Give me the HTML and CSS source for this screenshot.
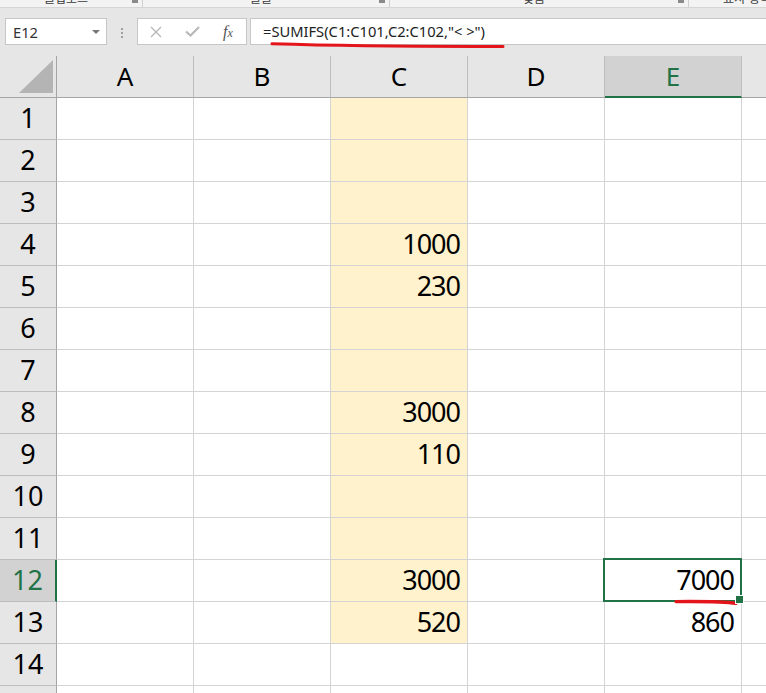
FILE: index.html
```html
<!DOCTYPE html>
<html lang="ko">

<head>
    <meta charset="UTF-8">
    <meta name="viewport" content="width=device-width, initial-scale=1.0">
    <title>SUMIFS</title>
    <link rel="stylesheet" href="styles.css">
</head>

<body>
    <!-- 리본 아래쪽 그룹 이름 (잘려서 보임) -->
    <div class="ribbon_tail">
        <div class="group g_clip"><span class="label">클립보드</span><span class="launcher"></span></div>
        <div class="group g_font"><span class="label">글꼴</span><span class="launcher"></span></div>
        <div class="group g_align"><span class="label">맞춤</span><span class="launcher"></span></div>
        <div class="group g_num"><span class="label">표시 형식</span></div>
    </div>

    <div class="formula_bar">
        <div class="name_box"><span>E12</span><span class="arrow"></span></div>
        <div class="dots"><i></i><i></i><i></i></div>
        <div class="fx_buttons">
            <span class="btn">
                <svg width="12" height="12" viewBox="0 0 12 12"><path d="M1 1L11 11M11 1L1 11" stroke="#b8b8b8" stroke-width="1.4" fill="none"/></svg>
            </span>
            <span class="btn">
                <svg width="15" height="11" viewBox="0 0 15 11"><path d="M1 5.5L5.5 9.5L14 1" stroke="#b8b8b8" stroke-width="2.2" fill="none"/></svg>
            </span>
            <span class="btn fx">f<small>x</small></span>
        </div>
        <div class="formula_input">=SUMIFS(C1:C101,C2:C102,"&lt; &gt;")</div>
    </div>

    <div class="sheet">
        <div class="corner"><svg width="34" height="33" viewBox="0 0 34 33"><polygon points="34,0 34,33 0,33" fill="#b4b4b4"/></svg></div>
        <div class="hd">A</div><div class="hd">B</div><div class="hd">C</div><div class="hd">D</div><div class="hd on">E</div><div class="hd">F</div>

        <div class="rh">1</div><div class="c"></div><div class="c"></div><div class="c y"></div><div class="c"></div><div class="c"></div><div class="c"></div>
        <div class="rh">2</div><div class="c"></div><div class="c"></div><div class="c y"></div><div class="c"></div><div class="c"></div><div class="c"></div>
        <div class="rh">3</div><div class="c"></div><div class="c"></div><div class="c y"></div><div class="c"></div><div class="c"></div><div class="c"></div>
        <div class="rh">4</div><div class="c"></div><div class="c"></div><div class="c y">1000</div><div class="c"></div><div class="c"></div><div class="c"></div>
        <div class="rh">5</div><div class="c"></div><div class="c"></div><div class="c y">230</div><div class="c"></div><div class="c"></div><div class="c"></div>
        <div class="rh">6</div><div class="c"></div><div class="c"></div><div class="c y"></div><div class="c"></div><div class="c"></div><div class="c"></div>
        <div class="rh">7</div><div class="c"></div><div class="c"></div><div class="c y"></div><div class="c"></div><div class="c"></div><div class="c"></div>
        <div class="rh">8</div><div class="c"></div><div class="c"></div><div class="c y">3000</div><div class="c"></div><div class="c"></div><div class="c"></div>
        <div class="rh">9</div><div class="c"></div><div class="c"></div><div class="c y">110</div><div class="c"></div><div class="c"></div><div class="c"></div>
        <div class="rh">10</div><div class="c"></div><div class="c"></div><div class="c y"></div><div class="c"></div><div class="c"></div><div class="c"></div>
        <div class="rh">11</div><div class="c"></div><div class="c"></div><div class="c y"></div><div class="c"></div><div class="c"></div><div class="c"></div>
        <div class="rh on">12</div><div class="c"></div><div class="c"></div><div class="c y">3000</div><div class="c"></div><div class="c sel">7000</div><div class="c"></div>
        <div class="rh">13</div><div class="c"></div><div class="c"></div><div class="c y">520</div><div class="c"></div><div class="c">860</div><div class="c"></div>
        <div class="rh">14</div><div class="c"></div><div class="c"></div><div class="c"></div><div class="c"></div><div class="c"></div><div class="c"></div>
        <div class="rh">15</div><div class="c"></div><div class="c"></div><div class="c"></div><div class="c"></div><div class="c"></div><div class="c"></div>
    </div>

    <!-- 빨간 밑줄 표시 -->
    <svg class="marks" width="766" height="693" viewBox="0 0 766 693">
        <path d="M272 43.8C330 45.6 420 46.6 503 46.4" stroke="#e3151b" stroke-width="3" stroke-linecap="round" fill="none"/>
        <path d="M676 601.6C700 601.4 724 601.4 736 603.4" stroke="#e3151b" stroke-width="3.4" stroke-linecap="round" fill="none"/>
    </svg>
</body>

</html>
```

FILE: styles.css
```css
* {
    margin: 0;
    padding: 0;
    box-sizing: border-box;
}

body {
    position: relative;
    width: 766px;
    height: 693px;
    overflow: hidden;
    background-color: #fff;
    font-family: "Noto Sans", "Noto Sans CJK KR", sans-serif;
}

/* 리본 */
.ribbon_tail {
    display: flex;
    height: 8px;
    overflow: hidden;
    background-color: #f3f3f3;
    border-bottom: 1px solid #d5d5d5;
    font-family: "Noto Sans CJK KR", sans-serif;
    font-size: 12px;
    line-height: 12px;
    color: #3c3c3c;
}

.ribbon_tail .group {
    display: flex;
    flex-shrink: 0;
    border-right: 1px solid #cfcfcf;
}

.ribbon_tail .label {
    flex: 1;
    margin-top: -8px;
    text-align: center;
    white-space: nowrap;
}

.ribbon_tail .launcher {
    width: 6px;
    height: 3px;
    margin-right: 4px;
    background-color: #8a8a8a;
}

.g_clip {
    width: 143px;
}

.g_font {
    width: 247px;
}

.g_align {
    width: 299px;
}

.g_num {
    width: 140px;
}

.g_num .label {
    padding-left: 34px;
    text-align: left;
}

/* 수식 입력줄 */
.formula_bar {
    display: flex;
    align-items: flex-start;
    height: 48px;
    padding: 10px 0 0 5px;
    background-color: #e6e6e6;
    font-size: 14.7px;
}

.name_box {
    display: flex;
    align-items: center;
    flex-shrink: 0;
    width: 102px;
    height: 27px;
    padding-left: 7px;
    border: 1px solid #c6c6c6;
    background-color: #fff;
    color: #333;
}

.name_box .arrow {
    width: 0;
    height: 0;
    margin-left: auto;
    margin-right: 6px;
    border-left: 4px solid transparent;
    border-right: 4px solid transparent;
    border-top: 4px solid #777;
}

.dots {
    display: flex;
    flex-direction: column;
    align-items: center;
    flex-shrink: 0;
    gap: 2px;
    width: 30px;
    padding-top: 10px;
}

.dots i {
    width: 2px;
    height: 2px;
    background-color: #a0a0a0;
}

.fx_buttons {
    display: flex;
    flex-shrink: 0;
    width: 110px;
    height: 27px;
    border: 1px solid #c6c6c6;
    background-color: #fff;
}

.fx_buttons .btn {
    display: flex;
    align-items: center;
    justify-content: center;
    width: 36px;
}

.fx_buttons .fx {
    font-family: "Liberation Serif", serif;
    font-style: italic;
    font-size: 16px;
    color: #555;
}

.fx_buttons .fx small {
    font-size: 12px;
    margin-top: 3px;
}

.formula_input {
    flex: 1;
    height: 27px;
    margin-left: 3px;
    padding-left: 12px;
    border: 1px solid #c6c6c6;
    border-right: none;
    background-color: #fff;
    line-height: 25px;
    color: #222;
    white-space: nowrap;
}

/* 시트 */
.sheet {
    display: grid;
    grid-template-columns: 57px repeat(6, 137px);
    grid-auto-rows: 42px;
    font-size: 27px;
    line-height: 28px;
    color: #000;
}

.corner {
    display: flex;
    align-items: flex-end;
    justify-content: flex-end;
    padding: 0 3px 4px 0;
    background-color: #e6e6e6;
    border-right: 1px solid #a5a5a5;
    border-bottom: 1px solid #a5a5a5;
}

.hd {
    display: flex;
    align-items: flex-end;
    justify-content: center;
    padding-bottom: 7px;
    background-color: #e6e6e6;
    border-right: 1px solid #bdbdbd;
    border-bottom: 1px solid #a5a5a5;
    font-size: 26px;
}

.hd.on {
    background-color: #d2d2d2;
    border-bottom: 2px solid #217346;
    padding-bottom: 6px;
    color: #217346;
}

.rh {
    display: flex;
    align-items: flex-end;
    justify-content: center;
    padding-bottom: 7px;
    background-color: #e6e6e6;
    border-right: 1px solid #a5a5a5;
    border-bottom: 1px solid #bdbdbd;
}

.rh.on {
    background-color: #d2d2d2;
    border-right: 2px solid #217346;
    color: #217346;
}

.c {
    display: flex;
    align-items: flex-end;
    justify-content: flex-end;
    padding: 0 7px 7px 0;
    border-right: 1px solid #d4d4d4;
    border-bottom: 1px solid #d4d4d4;
    letter-spacing: -1px;
}

.c.y {
    background-color: #fff2cc;
}

/* 선택된 셀 */
.c.sel {
    position: relative;
}

.c.sel::after {
    content: "";
    position: absolute;
    top: -2px;
    left: -2px;
    right: -1px;
    bottom: -1px;
    border: 2px solid #217346;
}

.c.sel::before {
    content: "";
    position: absolute;
    right: -3px;
    bottom: -3px;
    z-index: 1;
    width: 7px;
    height: 7px;
    border: 1px solid #fff;
    background-color: #217346;
}

.marks {
    position: absolute;
    top: 0;
    left: 0;
    pointer-events: none;
}
```
